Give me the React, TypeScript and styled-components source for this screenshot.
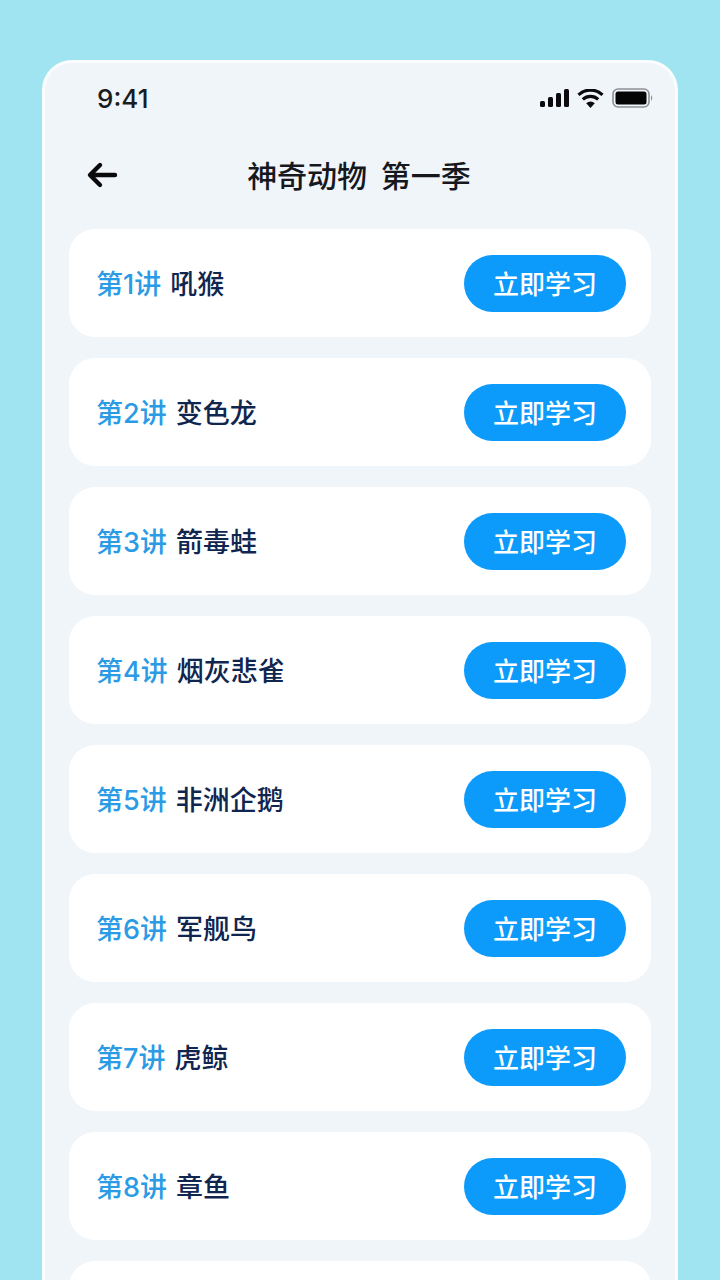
import styled, { createGlobalStyle } from "styled-components";

const GlobalStyle = createGlobalStyle`
  html, body {
    margin: 0;
    height: 1280px;
    overflow: hidden;
    background: #a0e4f1;
  }
  body {
    font-family: "Liberation Sans", "Noto Sans CJK SC", sans-serif;
  }
`;

const Page = styled.div`
  box-sizing: border-box;
  width: 720px;
  height: 1280px;
  padding: 60px 42px 0;
  overflow: hidden;
`;
const Phone = styled.div`
  box-sizing: border-box;
  height: 1300px;
  padding: 0 24px;
  background: #f0f5fa;
  border: 3px solid #f9fdfe;
  border-bottom: none;
  border-radius: 30px 30px 0 0;
`;
const StatusBar = styled.div`
  display: flex;
  align-items: center;
  justify-content: space-between;
  height: 30px;
  margin-top: 20px;
  padding: 0 0 0 28px;
`;
const Time = styled.span`
  font-family: Inter, "Liberation Sans", sans-serif;
  font-size: 26px;
  font-weight: 500;
  color: #1a1c20;
`;
const StatusIcons = styled.div`
  display: flex;
  align-items: center;
  gap: 8px;
  margin-right: -3px;
`;
const NavBar = styled.div`
  position: relative;
  display: flex;
  align-items: center;
  justify-content: center;
  height: 40px;
  margin-top: 41px;
`;
const BackIcon = styled.svg`
  position: absolute;
  left: 17px;
  top: 6px;
`;
const Title = styled.h1`
  margin: 0;
  padding-right: 2px;
  font-family: "Noto Sans CJK SC", sans-serif;
  font-size: 30px;
  font-weight: 500;
  line-height: 40px;
  word-spacing: 7px;
  color: #16181d;
`;
const List = styled.div`
  display: flex;
  flex-direction: column;
  gap: 21px;
  margin-top: 35px;
`;
const Card = styled.div`
  box-sizing: border-box;
  display: flex;
  align-items: center;
  justify-content: space-between;
  height: 108px;
  padding: 0 25px 0 27px;
  background: #ffffff;
  border-radius: 26px;
`;
const Lesson = styled.div`
  display: flex;
  align-items: center;
  gap: 9px;
  margin-bottom: 2px;
  font-family: Inter, "Noto Sans CJK SC", sans-serif;
  font-size: 27px;
  font-weight: 500;
`;
const LessonNo = styled.span`
  color: #2b9be6;
`;
const LessonName = styled.span`
  color: #10264f;
`;
const StudyButton = styled.button`
  width: 162px;
  height: 57px;
  padding: 0 0 2px;
  border: none;
  border-radius: 29px;
  background: #0d9bfb;
  color: #ffffff;
  font-family: "Noto Sans CJK SC", sans-serif;
  font-size: 26px;
  font-weight: 500;
`;

const lessons = [
  { no: "第1讲", name: "吼猴" },
  { no: "第2讲", name: "变色龙" },
  { no: "第3讲", name: "箭毒蛙" },
  { no: "第4讲", name: "烟灰悲雀" },
  { no: "第5讲", name: "非洲企鹅" },
  { no: "第6讲", name: "军舰鸟" },
  { no: "第7讲", name: "虎鲸" },
  { no: "第8讲", name: "章鱼" },
];

function StatusGlyphs() {
  return (
    <StatusIcons>
      <svg width="30" height="18" viewBox="0 0 30 18">
        <rect x="1" y="12" width="5" height="6" rx="1.5" fill="#0b0b0d" />
        <rect x="9" y="8" width="5" height="10" rx="1.5" fill="#0b0b0d" />
        <rect x="17" y="4" width="5" height="14" rx="1.5" fill="#0b0b0d" />
        <rect x="25" y="0" width="5" height="18" rx="1.5" fill="#0b0b0d" />
      </svg>
      <svg width="27" height="19" viewBox="0 0 27 19">
        <path d="M13.5 19 L9.2 14.2 A6.4 6.4 0 0 1 17.8 14.2 Z" fill="#0b0b0d" />
        <path d="M5.8 10.4 A11.4 11.4 0 0 1 21.2 10.4" fill="none" stroke="#0b0b0d" strokeWidth="3.2" />
        <path d="M1.5 5.8 A17.6 17.6 0 0 1 25.5 5.8" fill="none" stroke="#0b0b0d" strokeWidth="3.2" />
      </svg>
      <svg width="42" height="20" viewBox="0 0 42 20">
        <rect x="1" y="1" width="36" height="18" rx="5" fill="none" stroke="#8d9094" strokeWidth="1.6" />
        <rect x="3.5" y="3.5" width="31" height="13" rx="2.5" fill="#050505" />
        <path d="M39 7 Q41.5 10 39 13 Z" fill="#8d9094" />
      </svg>
    </StatusIcons>
  );
}

export default function App() {
  return (
    <Page>
      <GlobalStyle />
      <Phone>
        <StatusBar>
          <Time>9:41</Time>
          <StatusGlyphs />
        </StatusBar>
        <NavBar>
          <BackIcon width="32" height="30" viewBox="0 0 32 30">
            <path
              d="M29 15 H5 M14 5 L4 15 L14 25"
              fill="none"
              stroke="#0a0a0c"
              strokeWidth="4.4"
              strokeLinecap="round"
              strokeLinejoin="round"
            />
          </BackIcon>
          <Title>神奇动物 第一季</Title>
        </NavBar>
        <List>
          {lessons.map((lesson) => (
            <Card key={lesson.no}>
              <Lesson>
                <LessonNo>{lesson.no}</LessonNo>
                <LessonName>{lesson.name}</LessonName>
              </Lesson>
              <StudyButton>立即学习</StudyButton>
            </Card>
          ))}
          <Card />
        </List>
      </Phone>
    </Page>
  );
}
